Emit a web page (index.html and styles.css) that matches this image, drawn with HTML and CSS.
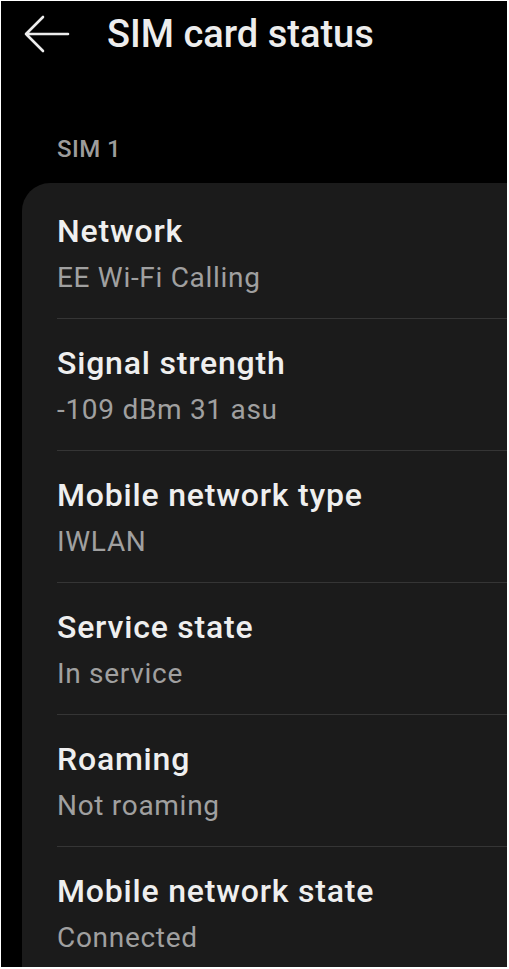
FILE: index.html
```html
<!DOCTYPE html>
<html>
<head>
<meta name="viewport" content="width=device-width, initial-scale=1">
<link rel="stylesheet" href="styles.css">
</head>
<body>

<div class="screen">

  <div class="header">
    <svg class="back" width="46" height="40" viewBox="0 0 46 40">
      <path d="M2 20 H44 M19 3 L2 20 L19 37" fill="none" stroke="#ececec" stroke-width="2.6" stroke-linecap="round" stroke-linejoin="round"/>
    </svg>
    <h1>SIM card status</h1>
  </div>

  <div class="section-label">SIM 1</div>

  <ul class="card">
    <li>
      <div class="item-title">Network</div>
      <div class="item-value">EE Wi-Fi Calling</div>
    </li>
    <li>
      <div class="item-title">Signal strength</div>
      <div class="item-value">-109 dBm 31 asu</div>
    </li>
    <li>
      <div class="item-title">Mobile network type</div>
      <div class="item-value">IWLAN</div>
    </li>
    <li>
      <div class="item-title">Service state</div>
      <div class="item-value">In service</div>
    </li>
    <li>
      <div class="item-title">Roaming</div>
      <div class="item-value">Not roaming</div>
    </li>
    <li>
      <div class="item-title">Mobile network state</div>
      <div class="item-value">Connected</div>
    </li>
  </ul>

</div>

</body>
</html>
```

FILE: styles.css
```css
* {
  box-sizing: border-box;
  font-family: Roboto, "Liberation Sans", sans-serif;
}

body {
  margin: 0;
  background: #fff;
}

/* The phone screen, with a thin white edge round it */
.screen {
  margin: 1px 2px 2px 1px;
  height: 966px;
  background: #000;
  overflow: hidden;
}

/* Top bar */
.header {
  display: flex;
  align-items: center;
  height: 66px;
  padding-left: 23px;
}

.back {
  flex: none;
}

.header h1 {
  margin: 0 0 0 37px;
  font-size: 38px;
  line-height: 46px;
  font-weight: 500;
  color: #ededed;
}

.section-label {
  margin: 68px 0 20px 56px;
  font-size: 24px;
  line-height: 28px;
  font-weight: 500;
  letter-spacing: 0.4px;
  color: #9c9c9c;
}

/* The rounded card with the list of values */
.card {
  list-style: none;
  margin: 0 -40px 0 21px;
  padding: 3px 0 0 35px;
  background: #1b1b1b;
  border-radius: 28px 0 0 0;
}

.card li {
  padding: 24px 0 22px;
  border-top: 1px solid #353535;
}

.card li:first-child {
  border-top: none;
  padding-top: 25px;
}

.item-title {
  font-size: 32px;
  line-height: 40px;
  font-weight: 500;
  letter-spacing: 0.8px;
  color: #efefef;
}

.item-value {
  margin-top: 9px;
  font-size: 28px;
  line-height: 36px;
  letter-spacing: 0.7px;
  color: #a0a0a0;
}
```
